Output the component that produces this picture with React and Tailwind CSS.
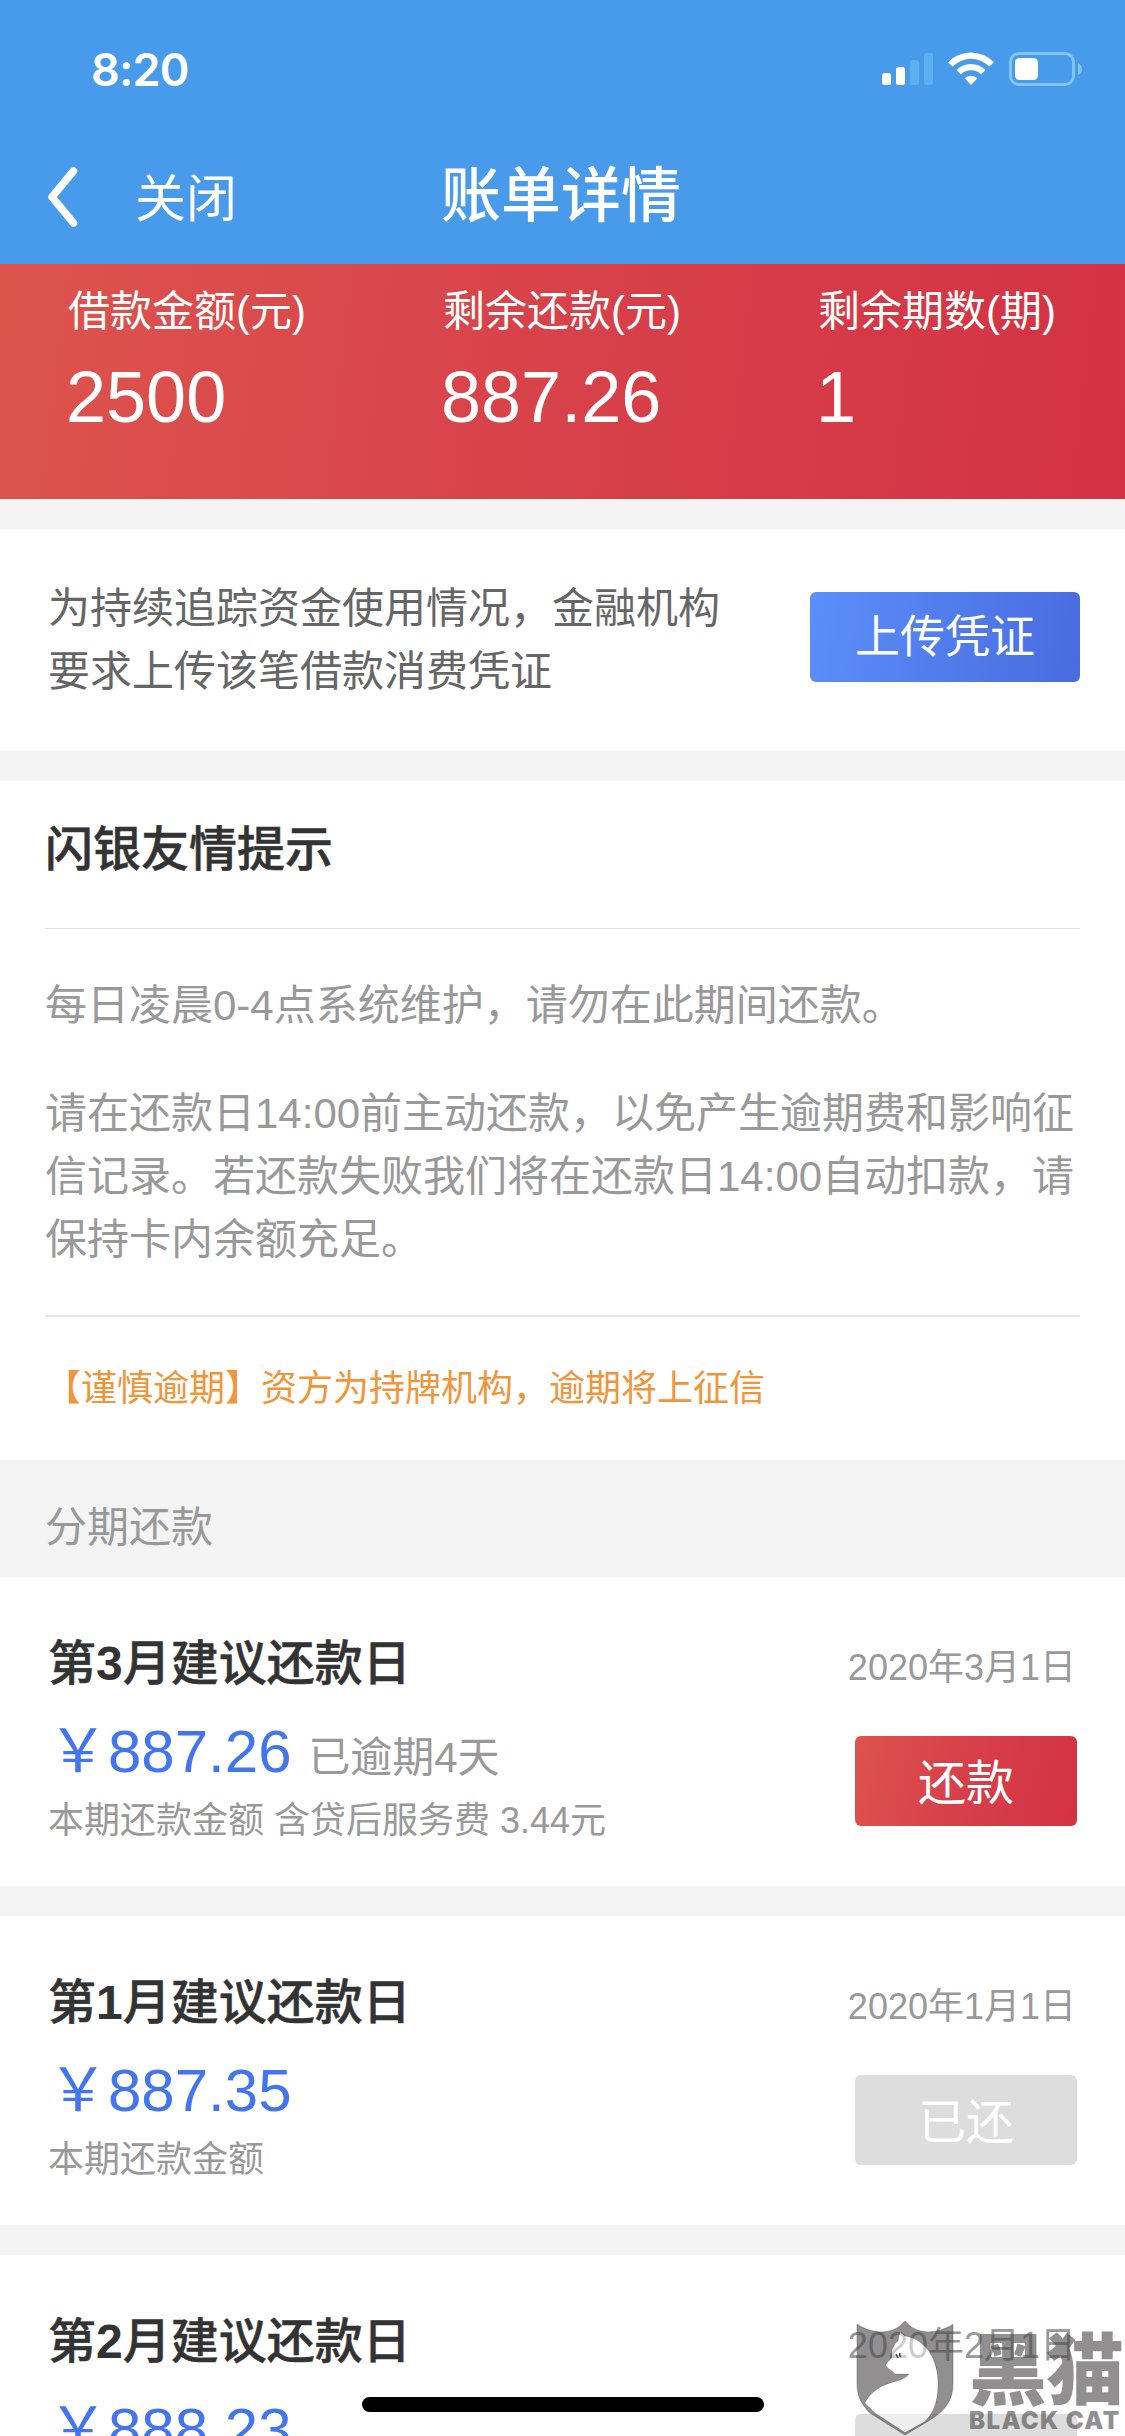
import React from "react";

const stats = [
  { label: "借款金额(元)", value: "2500" },
  { label: "剩余还款(元)", value: "887.26" },
  { label: "剩余期数(期)", value: "1" },
];

const bills = [
  {
    month: 3,
    amount: "887.26",
    overdue: "已逾期4天",
    note: "本期还款金额 含贷后服务费 3.44元",
    date: "2020年3月1日",
    paid: false,
  },
  {
    month: 1,
    amount: "887.35",
    note: "本期还款金额",
    date: "2020年1月1日",
    paid: true,
  },
  {
    month: 2,
    amount: "888.23",
    note: "本期还款金额",
    date: "2020年2月1日",
    paid: true,
  },
];

export default function App() {
  return (
    <div className="relative w-[1125px] h-[2436px] overflow-hidden bg-[#f4f4f4] font-['Liberation_Sans','Noto_Sans_CJK_SC',sans-serif]">
      <Header />
      <Summary />

      {/* UPLOAD */}
      <section className="mt-[30px] flex h-[222px] items-start justify-between bg-white pl-12 pr-[45px]">
        <p className="pt-[48px] text-[42px] leading-[63px] text-[#666]">
          为持续追踪资金使用情况，金融机构
          <br />
          要求上传该笔借款消费凭证
        </p>
        <button className="mt-[63px] h-[90px] w-[270px] rounded-[6px] bg-[linear-gradient(100deg,#5b8ff9,#486be0)] pt-[2px] text-[45px] leading-[88px] text-white">
          上传凭证
        </button>
      </section>

      <Tips />

      {/* BILL LIST */}
      <h2 className="h-[117px] pl-[45px] pt-[36px] text-[42px] leading-[63px] text-[#999]">
        分期还款
      </h2>
      <div className="flex flex-col gap-[30px]">
        {bills.map((bill) => (
          <BillCard key={bill.month} {...bill} />
        ))}
      </div>

      {/* Home indicator */}
      <div className="absolute left-[362px] top-[2397px] h-[15px] w-[402px] rounded-full bg-black" />
      <Watermark />
    </div>
  );
}

/* ===========================
      HEADER
=========================== */
function Header() {
  return (
    <header className="h-[264px] bg-[#479bea] text-white">
      <div className="flex h-[138px] items-center justify-between pl-[91px] pr-[42px]">
        <span className="font-[Inter] text-[45px] font-semibold leading-none tracking-[-0.8px]">
          8:20
        </span>
        <StatusIcons />
      </div>
      <div className="grid h-[118px] grid-cols-3 items-center">
        <div className="flex items-center">
          <svg className="ml-[46px] h-[62px] w-[34px]" viewBox="0 0 34 62" fill="none">
            <path
              d="M27.500 5 L6 31 L27.500 57"
              stroke="currentColor"
              strokeWidth="7.500"
              strokeLinecap="round"
              strokeLinejoin="round"
            />
          </svg>
          <span className="ml-[55px] pt-[5px] text-[51px] leading-[62px]">关闭</span>
        </div>
        <h1 className="pr-[3px] text-center text-[60px] font-medium leading-[72px]">
          账单详情
        </h1>
      </div>
    </header>
  );
}

function StatusIcons() {
  return (
    <svg className="h-[36px] w-[202px]" viewBox="0 0 202 36" fill="#fff">
      {/* signal */}
      <rect x="1" y="22" width="9" height="12" rx="2.500" />
      <rect x="15" y="16" width="9" height="18" rx="2.500" />
      <rect x="29" y="9" width="9" height="25" rx="2.500" fill="#5db0f0" />
      <rect x="43" y="2" width="9" height="32" rx="2.500" fill="#5db0f0" />
      {/* wifi */}
      <path d="M67 11.300 a32 32 0 0 1 46 0 l-4.500 4.300 a26 26 0 0 0 -37 0 Z" />
      <path d="M75.500 19 a20.500 20.500 0 0 1 29 0 l-4.500 4.500 a14 14 0 0 0 -20 0 Z" />
      <path d="M83.500 27.300 a9.500 9.500 0 0 1 13 0 l-6.500 6.700 Z" />
      {/* battery */}
      <rect
        x="129.500"
        y="2.500"
        width="63"
        height="31"
        rx="8.500"
        fill="none"
        stroke="#82c4f3"
        strokeWidth="3"
      />
      <rect x="134" y="7" width="23" height="22" rx="4.500" />
      <path d="M197 12 q4 2 4 6 t-4 6 Z" fill="#82c4f3" />
    </svg>
  );
}

/* ===========================
      SUMMARY
=========================== */
function Summary() {
  return (
    <section className="grid h-[235px] grid-cols-3 bg-[linear-gradient(97deg,#dd544d,#d8434a_45%,#d33243)] pt-[16px] text-white">
      {stats.map((item) => (
        <div key={item.label} className="pl-[66px]">
          <div className="pl-[2px] text-[42px] leading-[63px]">{item.label}</div>
          <div className="mt-[12px] text-[72px] leading-[84px]">{item.value}</div>
        </div>
      ))}
    </section>
  );
}

/* ===========================
      TIPS
=========================== */
function Tips() {
  return (
    <section className="mt-[30px] h-[679px] bg-white px-[45px]">
      <h2 className="h-[148px] border-b border-[#e2e2e2] pt-[33px] text-[48px] font-medium leading-[72px] text-[#333] [-webkit-text-stroke:0.5px_#333]">
        闪银友情提示
      </h2>
      <div className="flex h-[388px] flex-col gap-[45px] border-b-2 border-[#e6e6e6] pt-[45px] text-[42px] leading-[63px] text-[#999]">
        <p>每日凌晨0-4点系统维护，请勿在此期间还款。</p>
        <p className="whitespace-nowrap">
          请在还款日14:00前主动还款，以免产生逾期费和影响征
          <br />
          信记录。若还款失败我们将在还款日14:00自动扣款，请
          <br />
          保持卡内余额充足。
        </p>
      </div>
      <p className="pt-[45px] text-[36px] leading-[54px] text-[#f0953a]">
        【谨慎逾期】资方为持牌机构，逾期将上征信
      </p>
    </section>
  );
}

/* ===========================
      BILL CARD
=========================== */
function BillCard({ month, amount, overdue, note, date, paid }) {
  return (
    <article className="flex h-[309px] shrink-0 justify-between bg-white px-12">
      <div className="pt-[51px]">
        <h3 className="text-[48px] font-medium leading-[72px] text-[#333] [-webkit-text-stroke:0.5px_#333]">
          第<span className="font-bold [-webkit-text-stroke:0]">{month}</span>
          月建议还款日
        </h3>
        <div className="mt-[10px] h-[84px] text-[60px] leading-[84px] text-[#4475f0]">
          ￥{amount}{" "}
          {overdue && (
            <span className="text-[42px] leading-none text-[#999]">{overdue}</span>
          )}
        </div>
        <p className="text-[36px] leading-[54px] text-[#999]">{note}</p>
      </div>
      <div className="flex flex-col items-end pt-[64px]">
        <time className="pr-[1px] text-[36px] leading-[54px] text-[#999]">{date}</time>
        <button
          className={`mt-[41px] h-[90px] w-[222px] rounded-[6px] pt-[5px] text-[48px] leading-[85px] text-white ${
            paid
              ? "bg-[#ddd]"
              : "bg-[linear-gradient(105deg,#dd544d,#d8404a_45%,#d33243)]"
          }`}
        >
          {paid ? "已还" : "还款"}
        </button>
      </div>
    </article>
  );
}

/* ===========================
      WATERMARK
=========================== */
function Watermark() {
  return (
    <div className="absolute left-[856px] top-[2320px] flex">
      <svg className="h-[116px] w-[98px]" viewBox="0 0 98 116">
        {/* shield with the cat cut out of it */}
        <path
          fillRule="evenodd"
          d="M1 4.300 C18 15 38 15 49 1 C60 15 80 15 97 4.300 V63 C97 84 86 93 69 103 L49 115 L14 93 C5 84 1 76 1 63 Z
             M44 12 L49 16 C72 20 82 42 82 64 C82 84 76 95 68 102 L49 112.500 L19 93 L9 83 C13 74 22 67 34 63 C42 61 49 59 53 54 L39 54 C36 50 31 49 30 45 C30 42 36 40 36 36 C35 30 38 24 42 21 Z"
          fill="#494547"
          fillOpacity="0.6"
          stroke="#333"
          strokeOpacity="0.35"
        />
        <path
          d="M44 12 L49 16 C72 20 82 42 82 64 C82 84 76 95 68 102 L49 112.500 L19 93 L9 83 C13 74 22 67 34 63 C42 61 49 59 53 54 L39 54 C36 50 31 49 30 45 C30 42 36 40 36 36 C35 30 38 24 42 21 Z"
          fill="#fff"
          fillOpacity="0.5"
        />
        <path d="M40 34 l2 4 M44 33 q-1 4 1 3" stroke="#444" strokeWidth="1.500" fill="none" />
      </svg>
      <div className="ml-[15px] w-[154px] pt-[7px] text-[#494547]/60">
        <div className="font-['Noto_Sans_CJK_SC',sans-serif] text-[78px] font-black leading-[76px] tracking-[-1px]">
          黑猫
        </div>
        <div className="mt-[6px] whitespace-nowrap font-[Inter] text-[24px] font-black leading-[24px] tracking-[1.400px]">
          BLACK CAT
        </div>
      </div>
    </div>
  );
}
